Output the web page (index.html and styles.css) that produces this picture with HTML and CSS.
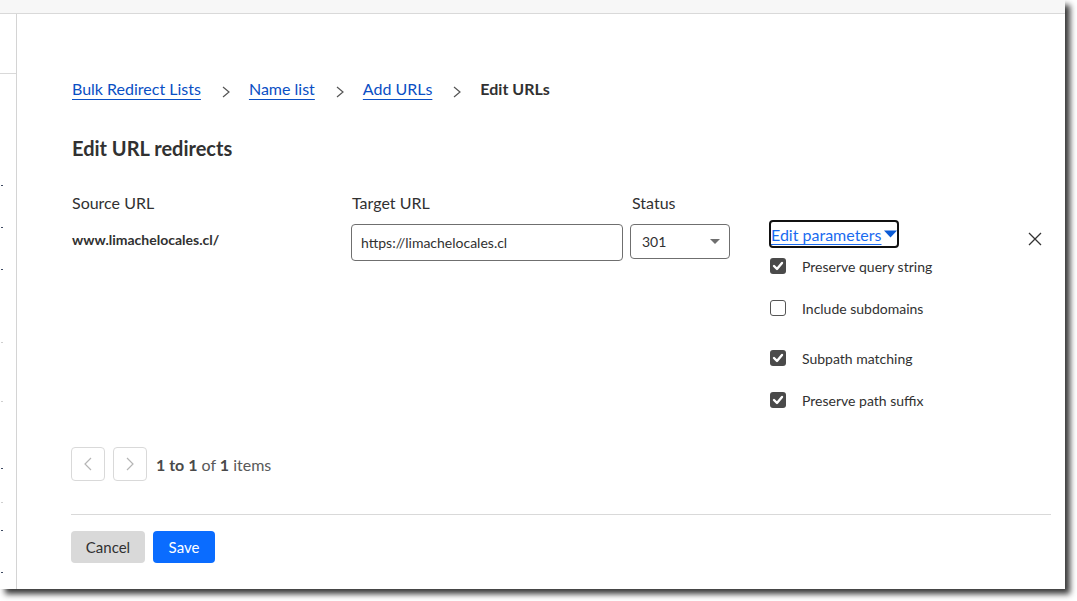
FILE: index.html
```html
<!DOCTYPE html>
<html lang="en">
<head>
<meta charset="utf-8">
<title>Edit URLs</title>
<link rel="stylesheet" href="styles.css">
</head>
<body>
<div class="window">
  <div class="topbar"></div>
  <div class="frame">
    <div class="side">
      <div class="side-head"></div>
      <span class="tick dark t1"></span>
      <span class="tick dark t2"></span>
      <span class="tick dark t3"></span>
      <span class="tick light t4"></span>
      <span class="tick light t5"></span>
      <span class="tick dark t6"></span>
      <span class="tick light t7"></span>
      <span class="tick dark t8"></span>
      <span class="tick dark t9"></span>
    </div>
    <main class="main">
      <nav class="crumbs">
        <a class="crumb-link" href="#">Bulk Redirect Lists</a>
        <svg class="chev" width="10" height="12" viewBox="0 0 10 12"><polyline points="2,1 8,6 2,11" fill="none" stroke="#555" stroke-width="1.2"/></svg>
        <a class="crumb-link" href="#">Name list</a>
        <svg class="chev" width="10" height="12" viewBox="0 0 10 12"><polyline points="2,1 8,6 2,11" fill="none" stroke="#555" stroke-width="1.2"/></svg>
        <a class="crumb-link" href="#">Add URLs</a>
        <svg class="chev" width="10" height="12" viewBox="0 0 10 12"><polyline points="2,1 8,6 2,11" fill="none" stroke="#555" stroke-width="1.2"/></svg>
        <span class="crumb-current">Edit URLs</span>
      </nav>

      <h1 class="title">Edit URL redirects</h1>

      <div class="grid">
        <div class="col-head">Source URL</div>
        <div class="col-head">Target URL</div>
        <div class="col-head">Status</div>
        <div></div>
        <div></div>

        <div class="source">www.limachelocales.cl/</div>
        <div class="target"><div class="input">https://limachelocales.cl</div></div>
        <div class="status">
          <div class="select"><span>301</span>
            <svg width="10" height="6" viewBox="0 0 10 6"><polygon points="0,0 10,0 5,5" fill="#6f6f6f"/></svg>
          </div>
        </div>
        <div class="params">
          <a class="param-link" href="#"><span class="param-text">Edit parameters</span><svg class="param-caret" width="13" height="8" viewBox="0 0 13 8"><polygon points="0,0.5 13,0.5 6.5,7.5" fill="#0a5bd6"/></svg></a>
          <label class="check r1"><span class="box on"><svg width="12" height="10" viewBox="0 0 12 10"><polyline points="2,5 5,8 10,2" fill="none" stroke="#fff" stroke-width="2.4" stroke-linecap="round" stroke-linejoin="round"/></svg></span>Preserve query string</label>
          <label class="check r2"><span class="box off"></span>Include subdomains</label>
          <label class="check r3"><span class="box on"><svg width="12" height="10" viewBox="0 0 12 10"><polyline points="2,5 5,8 10,2" fill="none" stroke="#fff" stroke-width="2.4" stroke-linecap="round" stroke-linejoin="round"/></svg></span>Subpath matching</label>
          <label class="check r4"><span class="box on"><svg width="12" height="10" viewBox="0 0 12 10"><polyline points="2,5 5,8 10,2" fill="none" stroke="#fff" stroke-width="2.4" stroke-linecap="round" stroke-linejoin="round"/></svg></span>Preserve path suffix</label>
        </div>
        <div class="close">
          <svg width="14" height="14" viewBox="0 0 14 14"><path d="M1 1 L13 13 M13 1 L1 13" stroke="#333" stroke-width="1.3" fill="none"/></svg>
        </div>
      </div>

      <div class="pager">
        <button class="pg-btn"><svg width="8" height="14" viewBox="0 0 8 14"><polyline points="7,1 1,7 7,13" fill="none" stroke="#b5b5b5" stroke-width="1.2"/></svg></button>
        <button class="pg-btn"><svg width="8" height="14" viewBox="0 0 8 14"><polyline points="1,1 7,7 1,13" fill="none" stroke="#b5b5b5" stroke-width="1.2"/></svg></button>
        <span class="pg-text"><b>1 to 1</b> of <b>1</b> items</span>
      </div>

      <div class="divider"></div>

      <div class="actions">
        <button class="btn cancel">Cancel</button>
        <button class="btn save">Save</button>
      </div>
    </main>
  </div>
</div>
</body>
</html>
```

FILE: styles.css
```css
* { box-sizing: border-box; }
html, body { margin: 0; padding: 0; background: #fff; }
body {
  font-family: "Lato", "Open Sans", sans-serif;
  color: #313131;
  width: 1077px;
  height: 601px;
  overflow: hidden;
}
.window {
  width: 1065px;
  height: 589px;
  background: #fff;
  box-shadow: 5px 5px 6px rgba(0,0,0,0.78);
  display: flex;
  flex-direction: column;
}
.topbar {
  height: 14px;
  background: #f7f7f7;
  border-bottom: 1px solid #d9d9d9;
}
.frame {
  flex: 1;
  display: flex;
}
.side {
  width: 17px;
  border-right: 1px solid #d4d4d4;
  display: flex;
  flex-direction: column;
  align-items: flex-start;
}
.side-head {
  width: 16px;
  height: 60px;
  border-bottom: 1px solid #d9d9d9;
}
.tick { display: block; width: 2px; height: 1px; margin-left: 1px; }
.tick.dark { background: #3e4a63; }
.tick.light { background: #cfcfcf; }
.t1 { margin-top: 111px; }
.t2 { margin-top: 41px; }
.t3 { margin-top: 41px; }
.t4 { margin-top: 72px; }
.t5 { margin-top: 58px; }
.t6 { margin-top: 66px; }
.t7 { margin-top: 33px; }
.t8 { margin-top: 27px; }
.t9 { margin-top: 41px; }

.main {
  flex: 1;
  padding: 62px 14px 0 54px;
}
.crumbs {
  display: flex;
  align-items: center;
  height: 24px;
  font-size: 16px;
  margin-left: 1px;
}
.crumb-link {
  color: #0a4fc4;
  text-decoration: underline;
  text-decoration-color: #0a4fc4;
  text-underline-offset: 4px;
  text-decoration-thickness: 1px;
}
.chev { margin: 8px 18px 0 20px; }
.crumb-current { font-weight: 700; color: #313131; }

.title {
  margin: 34px 0 0 1px;
  font-size: 20px;
  line-height: 28px;
  font-weight: 700;
  color: #313131;
}

.grid {
  margin-top: 29px;
  display: grid;
  grid-template-columns: 280px 279px 140px 1fr 40px;
  row-gap: 9px;
  align-items: start;
}
.col-head {
  font-size: 16px;
  line-height: 24px;
  padding-left: 1px;
}
.col-head:nth-child(3) { padding-left: 2px; }
.source {
  font-size: 14px;
  font-weight: 700;
  line-height: 16px;
  padding: 8px 0 0 1px;
}
.input {
  width: 272px;
  height: 37px;
  border: 1px solid #6f6f6f;
  border-radius: 4px;
  font-size: 14px;
  line-height: 35px;
  padding-left: 9px;
  color: #313131;
}
.select {
  width: 100px;
  height: 35px;
  border: 1px solid #6f6f6f;
  border-radius: 4px;
  display: flex;
  align-items: center;
  justify-content: space-between;
  padding: 0 9px 0 11px;
  font-size: 14px;
}
.params {
  display: flex;
  flex-direction: column;
  align-items: flex-start;
}
.param-link {
  display: flex;
  align-items: center;
  height: 24px;
  margin-top: -2px;
  outline: 2px solid #111;
  outline-offset: 0;
  border-radius: 2px;
  padding-right: 0;
  text-decoration: none;
  margin-left: 1px;
}
.param-text {
  color: #1a6bf0;
  font-size: 16px;
  text-decoration: underline;
  text-underline-offset: 3px;
  text-decoration-thickness: 1px;
}
.param-caret { margin-left: 2px; }
.check {
  display: flex;
  align-items: center;
  height: 24px;
  font-size: 14px;
  color: #313131;
}
.r1 { margin-top: 8px; }
.r2 { margin-top: 18px; }
.r3 { margin-top: 26px; }
.r4 { margin-top: 18px; }
.box {
  width: 16px;
  height: 16px;
  border-radius: 3px;
  margin-right: 16px;
  display: flex;
  align-items: center;
  justify-content: center;
}
.box.on { background: #4a4a4a; }
.box.off { border: 1.5px solid #555; background: #fff; }
.close {
  display: flex;
  justify-content: flex-end;
  padding: 8px 9px 0 0;
}

.pager {
  margin-top: 35px;
  display: flex;
  align-items: center;
  gap: 8px;
}
.pg-btn {
  width: 34px;
  height: 34px;
  border: 1px solid #d9d9d9;
  border-radius: 4px;
  background: #fff;
  display: flex;
  align-items: center;
  justify-content: center;
  padding: 0;
}
.pg-text {
  margin-left: 1px;
  font-size: 16px;
  color: #595959;
}
.pg-text b { font-weight: 700; color: #4a4a4a; }

.divider {
  margin-top: 33px;
  height: 1px;
  background: #d9d9d9;
}
.actions {
  margin-top: 16px;
  display: flex;
  gap: 8px;
}
.btn {
  height: 32px;
  border: 0;
  border-radius: 4px;
  font-family: inherit;
  font-size: 15px;
  padding: 0;
}
.cancel { width: 74px; background: #d9d9d9; color: #313131; }
.save { width: 62px; background: #0a6cff; color: #fff; }
```
